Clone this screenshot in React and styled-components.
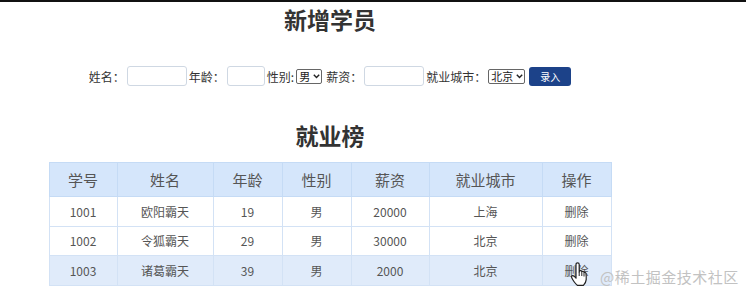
import React from "react";
import styled, { createGlobalStyle } from "styled-components";

const GlobalStyle = createGlobalStyle`
  body {
    margin: 0;
    background: #fff;
    font-family: "Microsoft YaHei", "Noto Sans CJK SC", sans-serif;
    color: #333;
  }
`;

const Page = styled.div`
  position: relative;
  width: 746px;
  height: 289px;
  overflow: hidden;
  border-top: 2px solid #111;
  box-sizing: border-box;
`;

const Content = styled.div`
  width: 660px;
  display: flex;
  flex-direction: column;
  align-items: center;
`;

const Title = styled.h1`
  margin: ${(p) => p.$top}px 0 0;
  font-size: 23px;
  line-height: 30px;
  font-weight: 700;
  color: #333;
`;

const Form = styled.div`
  margin-top: 32px;
  display: flex;
  align-items: center;
  gap: 2px;
  font-size: 12px;
  color: #333;
`;

const Label = styled.span`
  white-space: nowrap;
  margin-left: ${(p) => p.$gap || 0}px;
`;

const Input = styled.input`
  width: ${(p) => p.$w}px;
  height: 20px;
  box-sizing: border-box;
  border: 1px solid #cfd8e3;
  border-radius: 3px;
  outline: none;
`;

const SelectBox = styled.span`
  position: relative;
  display: inline-flex;
`;

const Select = styled.select`
  appearance: none;
  width: ${(p) => p.$w}px;
  height: 15px;
  font-size: 11px;
  line-height: 13px;
  padding: 0 10px 0 2px;
  border: 1px solid #666;
  border-radius: 2px;
  background: #fff;
  color: #222;
  font-family: inherit;
`;

const Chevron = styled.svg`
  position: absolute;
  right: 2px;
  top: 5px;
  pointer-events: none;
`;

const Button = styled.button`
  width: 42px;
  height: 19px;
  margin-left: 2px;
  border: none;
  border-radius: 3px;
  background: #1c4289;
  color: #fff;
  font-size: 10px;
  font-family: inherit;
  padding: 0;
`;

const Table = styled.table`
  margin-top: 12px;
  border-collapse: collapse;
  table-layout: fixed;
  width: 563px;
  text-align: center;
`;

const Th = styled.th`
  height: 33px;
  padding: 0;
  background: #d5e6fb;
  border: 1px solid #c5dbf5;
  font-size: 15px;
  font-weight: 400;
  color: #555;
`;

const Row = styled.tr`
  background: ${(p) => (p.$hover ? "#e0ebfa" : "#fff")};
`;

const Td = styled.td`
  height: 28.5px;
  padding: 0;
  border: 1px solid #d3e2f5;
  font-size: 12px;
  color: #555;
`;

const Watermark = styled.div`
  position: absolute;
  left: 600px;
  top: 264px;
  font-size: 15px;
  color: #c2c2c2;
  letter-spacing: 0.5px;
`;

const Cursor = styled.svg`
  position: absolute;
  left: 570px;
  top: 260px;
`;

const widths = [68, 96, 69, 69, 78, 113, 69];
const headers = ["学号", "姓名", "年龄", "性别", "薪资", "就业城市", "操作"];
const rows = [
  ["1001", "欧阳霸天", "19", "男", "20000", "上海"],
  ["1002", "令狐霸天", "29", "男", "30000", "北京"],
  ["1003", "诸葛霸天", "39", "男", "2000", "北京"],
];

function SmallSelect({ w, options }) {
  return (
    <SelectBox>
      <Select $w={w} defaultValue={options[0]}>
        {options.map((o) => (
          <option key={o}>{o}</option>
        ))}
      </Select>
      <Chevron width="7" height="5" viewBox="0 0 7 5">
        <path d="M0.8 0.8 3.5 3.6 6.2 0.8" fill="none" stroke="#222" strokeWidth="1.4" />
      </Chevron>
    </SelectBox>
  );
}

export default function App() {
  return (
    <Page>
      <GlobalStyle />
      <Content>
        <Title $top={2}>新增学员</Title>
        <Form>
          <Label>姓名：</Label>
          <Input $w={60} />
          <Label>年龄：</Label>
          <Input $w={38} />
          <Label>性别:</Label>
          <SmallSelect w={26} options={["男", "女"]} />
          <Label $gap={2}>薪资：</Label>
          <Input $w={60} />
          <Label>就业城市：</Label>
          <SmallSelect w={37} options={["北京", "上海"]} />
          <Button>录入</Button>
        </Form>
        <Title $top={34}>就业榜</Title>
        <Table>
          <colgroup>
            {widths.map((w, i) => (
              <col key={i} style={{ width: w }} />
            ))}
          </colgroup>
          <thead>
            <tr>
              {headers.map((h) => (
                <Th key={h}>{h}</Th>
              ))}
            </tr>
          </thead>
          <tbody>
            {rows.map((r, i) => (
              <Row key={r[0]} $hover={i === 2}>
                {r.map((c, j) => (
                  <Td key={j}>{c}</Td>
                ))}
                <Td>删除</Td>
              </Row>
            ))}
          </tbody>
        </Table>
      </Content>
      <Cursor width="20" height="26" viewBox="0 0 20 26">
        <path
          d="M6 2.5c0-1 .7-1.7 1.6-1.7S9.2 1.5 9.2 2.5V10l.3-1.2c.9-.4 1.9-.2 2.3.7.9-.4 1.9 0 2.2.9.9-.3 1.9.2 2 1.2.2 1.6.3 4 .2 6-.2 2.6-1.5 4.5-2.8 5.8H7.5C6 22.6 4.5 20.5 2.8 17.8 2 16.5 1.2 15 1.6 14.2c.4-.8 1.6-.8 2.5 0L6 16.2z"
          fill="#fff"
          stroke="#222"
          strokeWidth="1.2"
          strokeLinejoin="round"
        />
        <path d="M9.2 10v4M11.8 10v4M14 11v3.5" stroke="#222" strokeWidth="1" />
      </Cursor>
      <Watermark>@稀土掘金技术社区</Watermark>
    </Page>
  );
}
